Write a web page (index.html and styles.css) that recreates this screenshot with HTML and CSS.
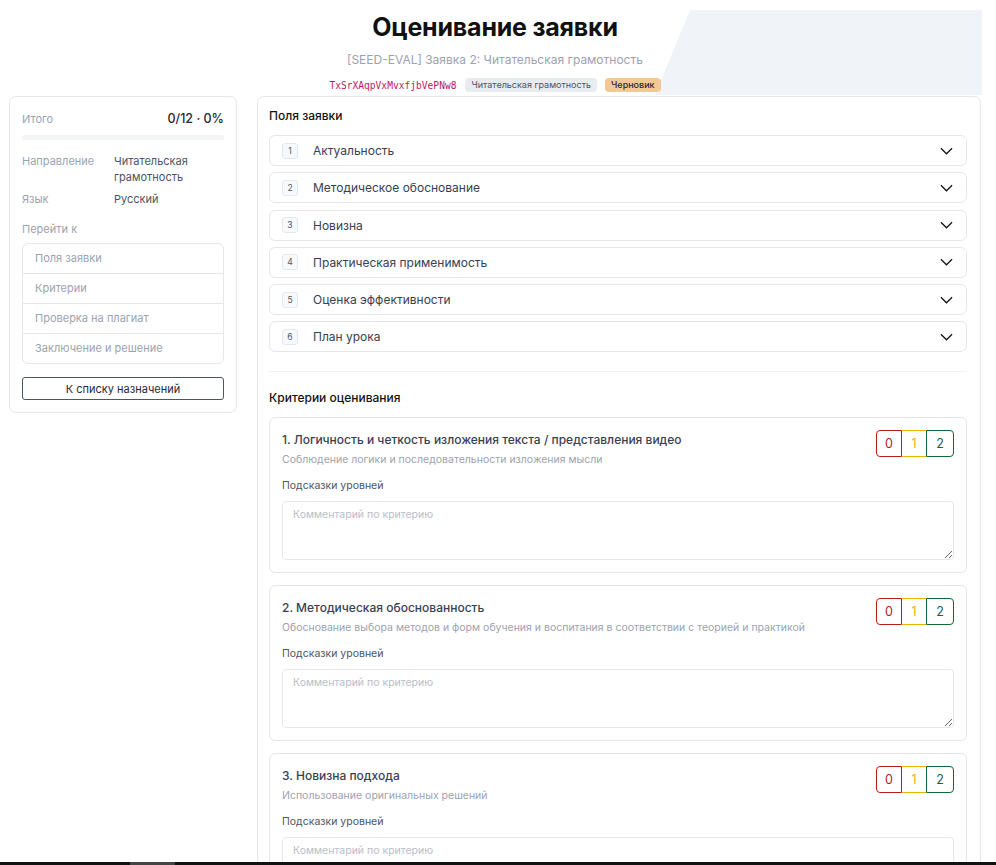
FILE: index.html
```html
<!DOCTYPE html>
<html lang="ru">
<head>
<meta charset="utf-8">
<title>Оценивание заявки</title>
<link rel="stylesheet" href="styles.css">
</head>
<body>
<div class="page">
  <header class="hero">
    <div class="hero-deco"></div>
    <h1 class="hero-title">Оценивание заявки</h1>
    <div class="hero-sub">[SEED-EVAL] Заявка 2: Читательская грамотность</div>
    <div class="hero-tags">
      <code class="code-id">TxSrXAqpVxMvxfjbVePNw8</code>
      <span class="pill pill-gray">Читательская грамотность</span>
      <span class="pill pill-orange">Черновик</span>
    </div>
  </header>

  <div class="layout">
    <aside class="side">
      <div class="side-total">
        <span class="lbl">Итого</span>
        <span class="total-val">0/12 · 0%</span>
      </div>
      <div class="progress"><div class="progress-fill" style="width:0%"></div></div>
      <div class="meta">
        <span class="lbl">Направление</span><span class="val">Читательская грамотность</span>
        <span class="lbl">Язык</span><span class="val">Русский</span>
      </div>
      <div class="lbl goto">Перейти к</div>
      <nav class="nav">
        <a class="nav-item">Поля заявки</a>
        <a class="nav-item">Критерии</a>
        <a class="nav-item">Проверка на плагиат</a>
        <a class="nav-item">Заключение и решение</a>
      </nav>
      <button class="back-btn">К списку назначений</button>
    </aside>

    <main class="main">
      <h2 class="sec-title">Поля заявки</h2>
      <div class="acc-list">
        <div class="acc"><span class="num">1</span><span class="acc-text">Актуальность</span><svg class="chev" viewBox="0 0 14 8"><path d="M1 1l6 6 6-6" fill="none" stroke="#111" stroke-width="1.3"/></svg></div>
        <div class="acc"><span class="num">2</span><span class="acc-text">Методическое обоснование</span><svg class="chev" viewBox="0 0 14 8"><path d="M1 1l6 6 6-6" fill="none" stroke="#111" stroke-width="1.3"/></svg></div>
        <div class="acc"><span class="num">3</span><span class="acc-text">Новизна</span><svg class="chev" viewBox="0 0 14 8"><path d="M1 1l6 6 6-6" fill="none" stroke="#111" stroke-width="1.3"/></svg></div>
        <div class="acc"><span class="num">4</span><span class="acc-text">Практическая применимость</span><svg class="chev" viewBox="0 0 14 8"><path d="M1 1l6 6 6-6" fill="none" stroke="#111" stroke-width="1.3"/></svg></div>
        <div class="acc"><span class="num">5</span><span class="acc-text">Оценка эффективности</span><svg class="chev" viewBox="0 0 14 8"><path d="M1 1l6 6 6-6" fill="none" stroke="#111" stroke-width="1.3"/></svg></div>
        <div class="acc"><span class="num">6</span><span class="acc-text">План урока</span><svg class="chev" viewBox="0 0 14 8"><path d="M1 1l6 6 6-6" fill="none" stroke="#111" stroke-width="1.3"/></svg></div>
      </div>
      <hr class="divider">
      <h2 class="sec-title">Критерии оценивания</h2>
      <div class="crit-list">
        <section class="crit">
          <div class="crit-head">
            <div>
              <div class="crit-title">1. Логичность и четкость изложения текста / представления видео</div>
              <div class="crit-desc">Соблюдение логики и последовательности изложения мысли</div>
            </div>
            <div class="scores"><button class="sc sc0">0</button><button class="sc sc1">1</button><button class="sc sc2">2</button></div>
          </div>
          <div class="hint">Подсказки уровней</div>
          <textarea class="comment" placeholder="Комментарий по критерию"></textarea>
        </section>
        <section class="crit">
          <div class="crit-head">
            <div>
              <div class="crit-title">2. Методическая обоснованность</div>
              <div class="crit-desc">Обоснование выбора методов и форм обучения и воспитания в соответствии с теорией и практикой</div>
            </div>
            <div class="scores"><button class="sc sc0">0</button><button class="sc sc1">1</button><button class="sc sc2">2</button></div>
          </div>
          <div class="hint">Подсказки уровней</div>
          <textarea class="comment" placeholder="Комментарий по критерию"></textarea>
        </section>
        <section class="crit">
          <div class="crit-head">
            <div>
              <div class="crit-title">3. Новизна подхода</div>
              <div class="crit-desc">Использование оригинальных решений</div>
            </div>
            <div class="scores"><button class="sc sc0">0</button><button class="sc sc1">1</button><button class="sc sc2">2</button></div>
          </div>
          <div class="hint">Подсказки уровней</div>
          <textarea class="comment" placeholder="Комментарий по критерию"></textarea>
        </section>
      </div>
    </main>
  </div>
</div>
<div class="taskbar"><span class="task-item"></span></div>
</body>
</html>
```

FILE: styles.css
```css
* { box-sizing: border-box; }
html, body { margin: 0; padding: 0; background: #fff; }
body {
  font-family: Inter, "Noto Sans", sans-serif;
  color: #1f2937;
  overflow: hidden;
  height: 865px;
}
.page { padding: 0 15px 0 9px; }

.hero {
  position: relative;
  height: 95px;
  text-align: center;
  padding-top: 9px;
}
.hero-deco {
  position: absolute;
  top: 10px;
  left: 646px;
  width: 327px;
  height: 85px;
  background: #f0f3f7;
  clip-path: polygon(35px 0, 100% 0, 100% 100%, 0 100%);
  z-index: 0;
}
.hero-title, .hero-sub, .hero-tags { position: relative; z-index: 1; }
.hero-title {
  margin: 0;
  font-size: 25px;
  font-weight: 700;
  line-height: 36px;
  color: #111;
  letter-spacing: -0.2px;
}
.hero-sub {
  margin-top: 6px;
  font-size: 12px;
  line-height: 18px;
  color: #9ca3af;
}
.hero-tags {
  margin-top: 9px;
  display: flex;
  justify-content: center;
  align-items: center;
  gap: 8px;
}
.code-id {
  font-family: "DejaVu Sans Mono", "Liberation Mono", monospace;
  font-size: 9.6px;
  color: #c2185b;
  margin-right: 1px;
}
.pill {
  font-size: 9px;
  line-height: 14px;
  padding: 0 6px;
  border-radius: 4px;
}
.pill-gray { background: #e8ebef; color: #4b5563; }
.pill-orange { background: #f4c796; color: #1f2937; font-weight: 500; }

.layout {
  display: flex;
  align-items: flex-start;
  gap: 20px;
  margin-top: 1px;
}
.side {
  width: 228px;
  flex: none;
  border: 1px solid #e5e7eb;
  border-radius: 7px;
  padding: 14px 12px 12px;
}
.lbl { color: #9ca3af; font-size: 11px; }
.side-total {
  display: flex;
  justify-content: space-between;
  align-items: center;
  line-height: 16px;
}
.total-val { font-size: 12.5px; font-weight: 500; color: #1f2937; }
.progress {
  height: 5px;
  background: #f3f4f6;
  border-radius: 3px;
  margin-top: 8px;
  overflow: hidden;
}
.progress-fill { height: 100%; background: #16a34a; }
.meta {
  display: grid;
  grid-template-columns: 92px 1fr;
  row-gap: 6px;
  margin-top: 13px;
  font-size: 11px;
  line-height: 16px;
}
.meta .val { color: #4b5563; }
.goto { display: block; margin-top: 14px; line-height: 16px; }
.nav {
  margin-top: 6px;
  border: 1px solid #e5e7eb;
  border-radius: 6px;
  display: flex;
  flex-direction: column;
}
.nav-item {
  display: block;
  height: 30px;
  line-height: 29px;
  padding-left: 12px;
  font-size: 11px;
  color: #9ca3af;
  border-bottom: 1px solid #e5e7eb;
}
.nav-item:last-child { border-bottom: none; height: 29px; }
.back-btn {
  display: block;
  width: 100%;
  margin-top: 13px;
  height: 23px;
  border: 1px solid #4b5563;
  border-radius: 3px;
  background: #fff;
  font-family: inherit;
  font-size: 11px;
  color: #1f2937;
}

.main {
  flex: 1;
  border: 1px solid #e5e7eb;
  border-radius: 7px;
  padding: 10px 13px 20px 11px;
  min-height: 800px;
}
.sec-title {
  margin: 0;
  font-size: 12px;
  font-weight: 500;
  color: #111;
  line-height: 18px;
}
.acc-list {
  margin-top: 10px;
  display: flex;
  flex-direction: column;
  gap: 6.3px;
}
.acc {
  height: 31px;
  border: 1px solid #e5e7eb;
  border-radius: 6px;
  display: flex;
  align-items: center;
  padding: 0 13px 0 12px;
}
.num {
  width: 16px;
  height: 16px;
  border: 1px solid #e2e8f0;
  background: #f7f9fc;
  border-radius: 3px;
  font-size: 8.5px;
  color: #4b5563;
  display: flex;
  align-items: center;
  justify-content: center;
}
.acc-text {
  flex: 1;
  margin-left: 15px;
  font-size: 12px;
  color: #374151;
}
.chev { width: 13px; height: 8px; }

.divider {
  border: none;
  border-top: 1px solid #f1f2f4;
  margin: 19px 0 17px;
}
.crit-list {
  margin-top: 10px;
  display: flex;
  flex-direction: column;
  gap: 12px;
}
.crit {
  border: 1px solid #e5e7eb;
  border-radius: 6px;
  padding: 13px 12px 12px 12px;
}
.crit-head {
  display: flex;
  justify-content: space-between;
  align-items: flex-start;
}
.crit-title {
  font-size: 12px;
  font-weight: 500;
  color: #374151;
  line-height: 18px;
}
.crit-desc {
  margin-top: 3px;
  font-size: 10.5px;
  color: #9ca3af;
  line-height: 16px;
}
.scores { display: flex; margin-top: -1px; }
.sc {
  width: 26px;
  height: 27px;
  background: #fff;
  font-family: inherit;
  font-size: 12.5px;
  padding: 0;
  border: 1px solid;
}
.sc0 { border-color: #b91c1c; color: #b91c1c; border-radius: 4px 0 0 4px; }
.sc1 { border-color: #eab308; color: #eab308; border-left: none; border-right: none; width: 24px; }
.sc2 { border-color: #166534; color: #166534; border-radius: 0 4px 4px 0; width: 28px; }
.hint {
  margin-top: 10px;
  font-size: 10.5px;
  color: #4b5563;
  line-height: 16px;
}
.comment {
  display: block;
  width: 100%;
  height: 59px;
  margin-top: 7px;
  border: 1px solid #e5e7eb;
  border-radius: 4px;
  padding: 6px 10px;
  font-family: inherit;
  font-size: 10.5px;
  resize: vertical;
}
.comment::placeholder { color: #b8bec7; }

.taskbar {
  position: fixed;
  left: 0;
  right: 0;
  bottom: 0;
  height: 3px;
  background: #111;
}
.task-item {
  position: absolute;
  left: 130px;
  width: 45px;
  top: 0;
  bottom: 0;
  background: #444;
}
```
